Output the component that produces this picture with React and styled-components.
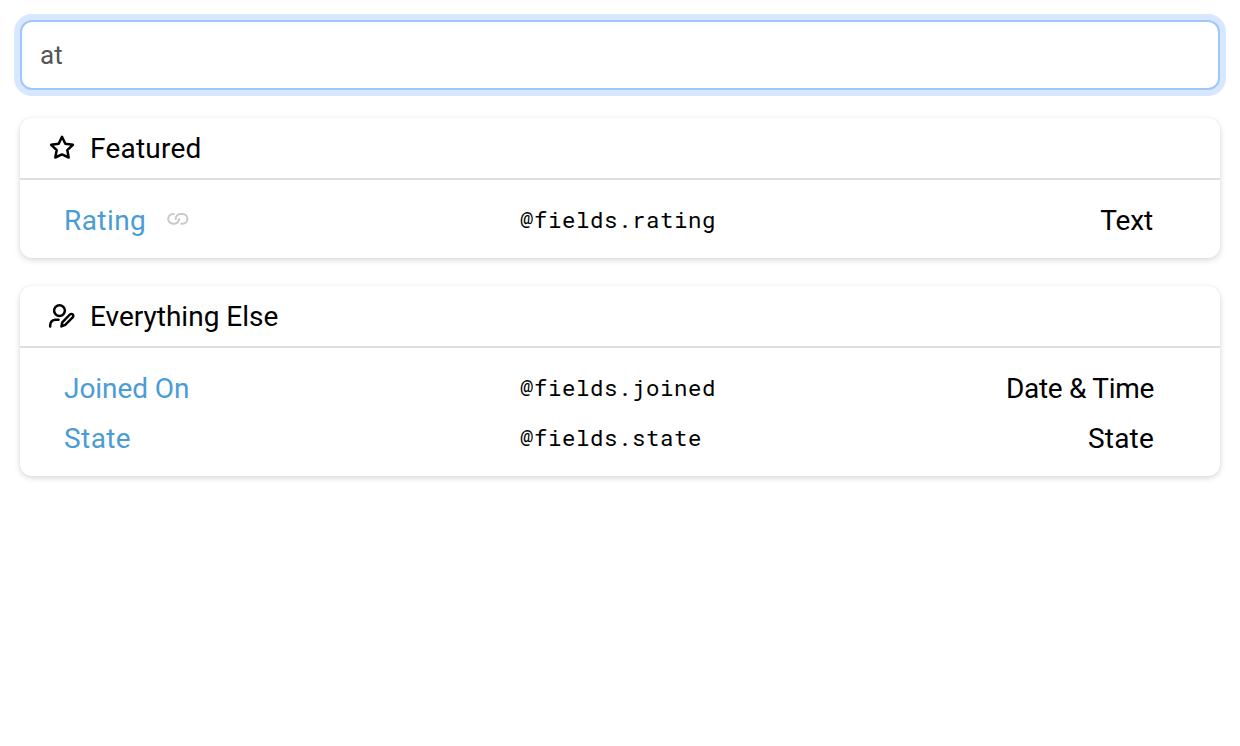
import React from 'react';
import styled, { createGlobalStyle } from 'styled-components';

const GlobalStyle = createGlobalStyle`
  * { box-sizing: border-box; }
  body { margin: 0; background: #fff; color: #000; font-family: Roboto, sans-serif; font-size: 28px; }
`;

const Page = styled.main`
  display: flex;
  flex-direction: column;
  gap: 28px;
  padding: 20px;
`;

const SearchInput = styled.input`
  width: 100%;
  height: 70px;
  padding: 0 18px;
  border: 2px solid #a0c6ff;
  border-radius: 12px;
  outline: none;
  box-shadow: 0 0 0 6px #d7e7ff;
  color: #555;
  font: 26px/36px Roboto, sans-serif;
`;

const Card = styled.section`
  border-radius: 12px;
  background: #fff;
  box-shadow: 0 2px 6px rgba(0, 0, 0, 0.16), 0 0 2px rgba(0, 0, 0, 0.04);
`;

const CardHeader = styled.header`
  display: flex;
  align-items: center;
  gap: 14px;
  height: 62px;
  padding: 0 28px;
  border-bottom: 2px solid #dedede;
`;

const Title = styled.h2`
  margin: 0;
  padding-top: 2px;
  font-size: 28px;
  font-weight: 400;
  line-height: 36px;
  letter-spacing: ${(p) => p.$tracking}px;
`;

const Rows = styled.div`
  padding: 15px 44px 13px;
`;

const Row = styled.div`
  display: grid;
  grid-template-columns: 456px 1fr auto;
  align-items: center;
  height: 50px;
  padding-right: 22px;
`;

const Name = styled.span`
  display: flex;
  align-items: center;
  gap: 20px;
  color: #4b9cd6;
  letter-spacing: ${(p) => p.$tracking}px;
`;

const Token = styled.code`
  padding-bottom: 2px;
  font: 22.4px "Roboto Mono", "DejaVu Sans Mono", monospace;
  letter-spacing: 0.56px;
`;

const Type = styled.span`
  text-align: right;
  letter-spacing: ${(p) => p.$tracking}px;
  padding-right: ${(p) => p.$inset || 0}px;
`;

const Icon = styled.svg`
  display: block;
  flex: none;
  fill: none;
  stroke: currentColor;
  stroke-linecap: round;
  stroke-linejoin: round;
`;

const LinkMark = styled(Icon)`
  color: #c8c8c8;
  margin-top: -2px;
`;

const StarIcon = () => (
  <Icon width="28" height="28" viewBox="0 0 28 28" strokeWidth="2.5">
    <path d="M14 2.8l3.3 7 7.6 1-5.6 5.3 1.4 7.4-6.7-3.1-6.7 3.1 1.4-7.4-5.6-5.3 7.6-1z" />
  </Icon>
);

const UserEditIcon = () => (
  <Icon width="28" height="28" viewBox="0 0 28 28" strokeWidth="2.5">
    <circle cx="11.5" cy="8.6" r="5.4" />
    <path d="M2.2 24.6v-1.6a5.3 5.3 0 0 1 5.3-5.3h3" />
    <path d="M13.4 24.4l.9-4.1 7.6-7.8a1.9 1.9 0 0 1 2.8 2.8l-7.5 7.5z" />
  </Icon>
);

const LinkIcon = () => (
  <LinkMark width="24" height="16" viewBox="0 0 24 16" strokeWidth="2">
    <path d="M7.8 3.1H7a4.8 4.8 0 0 0 0 9.6h1.4a4.7 4.7 0 0 0 4.7-4.8" />
    <path d="M15.2 12.7h1.4a4.8 4.8 0 0 0 0-9.6h-2.2a4.7 4.7 0 0 0-4.7 4.8" />
  </LinkMark>
);

const groups = [
  {
    title: 'Featured',
    tracking: 0.22,
    icon: StarIcon,
    rows: [{ name: 'Rating', nameTracking: 0.42, token: 'rating', type: 'Text', typeTracking: -0.1, typeInset: 1, linked: true }],
  },
  {
    title: 'Everything Else',
    tracking: 0,
    icon: UserEditIcon,
    rows: [
      { name: 'Joined On', nameTracking: -0.06, token: 'joined', type: 'Date & Time', typeTracking: -0.3 },
      { name: 'State', nameTracking: 0.42, token: 'state', type: 'State', typeTracking: 0.2 },
    ],
  },
];

export default function App() {
  return (
    <>
      <GlobalStyle />
      <Page>
        <SearchInput aria-label="Search fields" defaultValue="at" />
        {groups.map(({ title, tracking, icon: GroupIcon, rows }) => (
          <Card key={title}>
            <CardHeader>
              <GroupIcon />
              <Title $tracking={tracking}>{title}</Title>
            </CardHeader>
            <Rows>
              {rows.map((row) => (
                <Row key={row.name}>
                  <Name $tracking={row.nameTracking}>
                    {row.name}
                    {row.linked && <LinkIcon />}
                  </Name>
                  <Token>@fields.{row.token}</Token>
                  <Type $tracking={row.typeTracking} $inset={row.typeInset}>{row.type}</Type>
                </Row>
              ))}
            </Rows>
          </Card>
        ))}
      </Page>
    </>
  );
}
